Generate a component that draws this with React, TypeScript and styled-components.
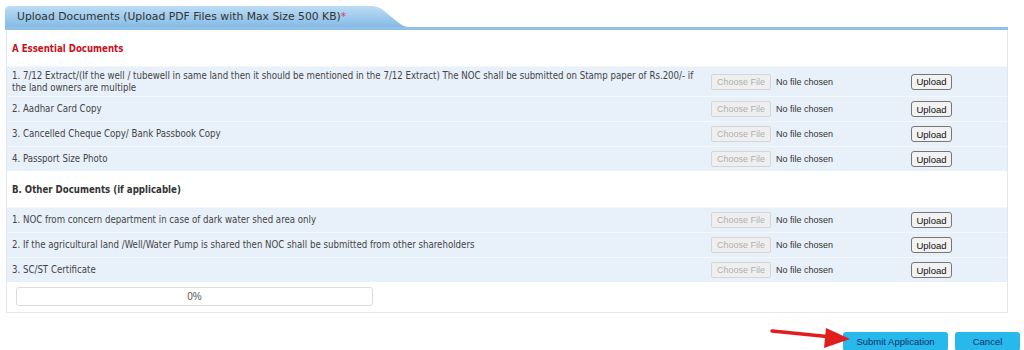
import styled, { createGlobalStyle } from 'styled-components'

const GlobalStyle = createGlobalStyle`
  body {
    margin: 0;
    background: #fff;
    font-family: "DejaVu Sans Condensed", "DejaVu Sans", sans-serif;
    color: #444;
  }
`

const Page = styled.div`
  width: 1024px;
  padding-top: 6px;
`

const TabStrip = styled.div`
  margin: 0 16px 0 5px;
  border-bottom: 3px solid #8ec0e8;
`

const Tab = styled.div`
  width: 404px;
  height: 21px;
  display: flex;
  align-items: center;
  padding-left: 12px;
  box-sizing: border-box;
  background: linear-gradient(#bcdcf5, #86bbe5);
  clip-path: path('M0 21 L0 5 Q0 0 5 0 L366 0 Q373 0 378 4 L394 17 Q399 21 404 21 Z');
  font-family: "DejaVu Sans", sans-serif;
  font-size: 10.8px;
  color: #333;
`

const Star = styled.span`
  color: #e0336b;
`

const Panel = styled.div`
  margin: 0 16px 0 6px;
  border: 1px solid #e3e6ea;
  border-top: none;
`

const SectionTitle = styled.div<{ $red?: boolean }>`
  height: 36px;
  display: flex;
  align-items: center;
  padding-left: 5px;
  font-weight: bold;
  font-size: 9.6px;
  color: ${p => (p.$red ? '#c8101a' : '#333')};
`

const Row = styled.div`
  display: grid;
  grid-template-columns: 1fr 200px 101px;
  align-items: center;
  min-height: 24px;
  background: #e8f0fa;
  border-top: 1px solid #f4f7fb;
`

const Label = styled.div`
  padding: 3px 5px;
  font-size: 9.6px;
  line-height: 11.5px;
  color: #444;
`

const FileCell = styled.div`
  display: flex;
  align-items: center;
  gap: 5px;
  padding-left: 5px;
  font-family: "Liberation Sans", Arial, sans-serif;
  font-size: 9px;
  color: #333;
`

const ChooseBtn = styled.span`
  width: 60px;
  height: 16px;
  box-sizing: border-box;
  display: flex;
  align-items: center;
  justify-content: center;
  background: #efefef;
  border: 1px solid #d6d6d6;
  border-radius: 2px;
  color: #b0b0b0;
`

const UploadCell = styled.div`
  display: flex;
  align-items: center;
  padding-left: 5px;
`

const UploadBtn = styled.button`
  width: 41px;
  height: 16px;
  padding: 0;
  background: #f2f2f2;
  border: 1px solid #767676;
  border-radius: 3px;
  font-family: "Liberation Sans", Arial, sans-serif;
  font-size: 9.5px;
  color: #111;
`

const ProgressWrap = styled.div`
  background: #fff;
  padding: 5px 9px 6px;
`

const Progress = styled.div`
  width: 357px;
  height: 19px;
  box-sizing: border-box;
  border: 1px solid #dcdcdc;
  border-radius: 3px;
  display: flex;
  align-items: center;
  justify-content: center;
  font-family: "Liberation Sans", Arial, sans-serif;
  font-size: 10px;
  color: #555;
`

const Footer = styled.div`
  display: flex;
  justify-content: flex-end;
  align-items: center;
  gap: 7px;
  padding: 19px 4px 0 0;
`

const ActionBtn = styled.button<{ $w: number }>`
  width: ${p => p.$w}px;
  height: 19px;
  padding: 0;
  background: #27b8ec;
  border: none;
  border-radius: 3px;
  font-family: "Liberation Sans", Arial, sans-serif;
  font-size: 9.5px;
  color: #14306a;
`

const Arrow = styled.svg`
  margin-right: -16px;
  margin-top: -6px;
  position: relative;
  z-index: 1;
`

const essential = [
  '1. 7/12 Extract/(If the well / tubewell in same land then it should be mentioned in the 7/12 Extract) The NOC shall be submitted on Stamp paper of Rs.200/- if the land owners are multiple',
  '2. Aadhar Card Copy',
  '3. Cancelled Cheque Copy/ Bank Passbook Copy',
  '4. Passport Size Photo',
]

const other = [
  '1. NOC from concern department in case of dark water shed area only',
  '2. If the agricultural land /Well/Water Pump is shared then NOC shall be submitted from other shareholders',
  '3. SC/ST Certificate',
]

function DocRow({ label }: { label: string }) {
  return (
    <Row>
      <Label>{label}</Label>
      <FileCell>
        <ChooseBtn>Choose File</ChooseBtn>
        <span>No file chosen</span>
      </FileCell>
      <UploadCell>
        <UploadBtn>Upload</UploadBtn>
      </UploadCell>
    </Row>
  )
}

export default function App() {
  return (
    <Page>
      <GlobalStyle />
      <TabStrip>
        <Tab>
          Upload Documents (Upload PDF Files with Max Size 500 KB)<Star>*</Star>
        </Tab>
      </TabStrip>
      <Panel>
        <SectionTitle $red>A Essential Documents</SectionTitle>
        {essential.map(l => (
          <DocRow key={l} label={l} />
        ))}
        <SectionTitle>B. Other Documents (if applicable)</SectionTitle>
        {other.map(l => (
          <DocRow key={l} label={l} />
        ))}
        <ProgressWrap>
          <Progress>0%</Progress>
        </ProgressWrap>
      </Panel>
      <Footer>
        <Arrow width="82" height="22" viewBox="0 0 82 22">
          <line x1="2" y1="3" x2="62" y2="9" stroke="#e11d1d" strokeWidth="3.5" strokeLinecap="round" />
          <polygon points="56,0 80,11 54,20" fill="#e11d1d" />
        </Arrow>
        <ActionBtn $w={105}>Submit Application</ActionBtn>
        <ActionBtn $w={65}>Cancel</ActionBtn>
      </Footer>
    </Page>
  )
}
